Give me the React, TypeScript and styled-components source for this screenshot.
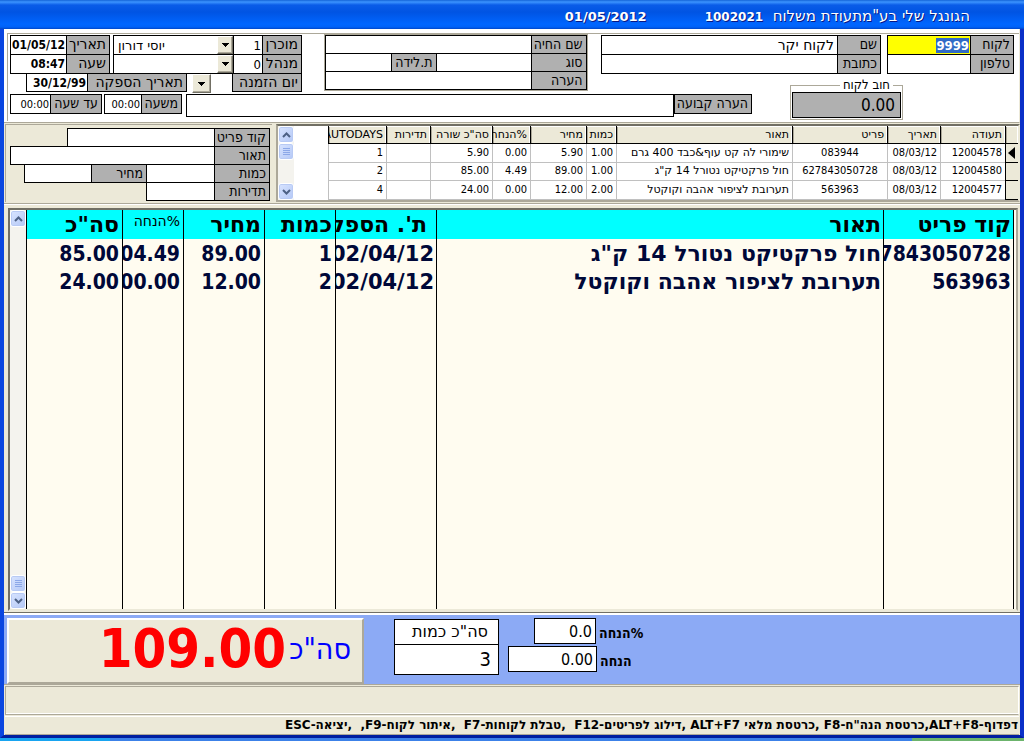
import React, { useEffect, useRef } from "react";
import styled, { createGlobalStyle } from "styled-components";

const face = "#ece9d8";
const shadow = "#aca899";
const dark = "#716f64";
const labelGray = "#b0b0b0";
const ui = '"DejaVu Sans Condensed", "DejaVu Sans", "Liberation Sans", sans-serif';
const wide = '"DejaVu Sans", "Liberation Sans", sans-serif';

const GlobalStyle = createGlobalStyle`
  *, *::before, *::after { box-sizing: border-box; }
  body { margin: 0; background: #0a3fd0; font: 12px/16px ${ui}; color: #000; }
  input, select, button, output { font: inherit; color: inherit; }
  input::selection { background: #316ac5; color: #fff; }
`;

const Desktop = styled.div`
  direction: rtl;
  min-height: 100vh;
  display: flex;
  flex-direction: column;
`;

const Window = styled.main`
  flex: 1;
  display: flex;
  flex-direction: column;
  border: solid;
  border-width: 0 4px 3px;
  border-color: #0a46e0 #0a30c8 #001ea0 #0a46e0;
  background: ${face};
`;

const TitleBar = styled.header`
  display: flex;
  align-items: center;
  gap: 58px;
  height: 29px;
  padding: 4px 54px 0 0;
  margin: 0 -4px;
  background: linear-gradient(#1464d8 0, #3c94ff 2px, #0a5ce8 5px, #0054e3 12px, #0066ff 24px, #0062f8 27px, #0046c8 29px);
  color: #fff;
  font-family: ${wide};
  text-shadow: 1px 1px 0 #0a1883;
`;

const TitleText = styled.h1`
  margin: 0;
  font-size: 15px;
  line-height: 16px;
  font-weight: 400;
  white-space: pre;
`;

const TitleNumber = styled.span`
  font-weight: 700;
  font-size: 12px;
`;

const TitleDate = styled.time`
  font-weight: 700;
  font-size: 13px;
`;

const HeaderPanel = styled.section`
  background: #fff;
  padding: 4px 0 1px 3px;
  border-bottom: 1px solid ${shadow};
  border-right: 1px solid ${face};
`;

const HeaderInner = styled.div`
  border-top: 1px solid ${shadow};
  border-left: 1px solid ${shadow};
  padding: 1px 5px 1px 2px;
`;

const TopRow = styled.div`
  display: flex;
  align-items: flex-start;
`;

const Group = styled.div<{ $w?: number; $grow?: number; $gap?: number; $etched?: boolean }>`
  flex: ${(p) => (p.$grow ? `${p.$grow} 1 0` : `0 0 ${p.$w}px`)};
  min-width: 0;
  margin-left: ${(p) => p.$gap ?? 0}px;
  ${(p) => p.$etched && `outline: 1px solid ${shadow};`}
`;

const FieldRow = styled.div<{ $w?: number; $h?: number }>`
  display: flex;
  gap: 1px;
  padding: 1px;
  width: ${(p) => (p.$w ? `${p.$w}px` : "auto")};
  height: ${(p) => p.$h ?? 20}px;
  background: #000;
  & + & { margin-top: -1px; }
`;

const Label = styled.label<{ $w: number; $wide?: boolean }>`
  flex: 0 0 ${(p) => p.$w}px;
  background: ${labelGray};
  padding: 0 3px;
  font-family: ${(p) => (p.$wide ? wide : ui)};
  font-size: 14px;
  line-height: 16px;
  white-space: nowrap;
  overflow: hidden;
`;

const Input = styled.input<{ $w?: number; $bold?: boolean; $yellow?: boolean; $size?: number }>`
  flex: ${(p) => (p.$w ? `0 0 ${p.$w}px` : "1 1 0")};
  min-width: 0;
  height: 100%;
  border: 0;
  border-radius: 0;
  outline: 0;
  padding: 0 1px;
  background: ${(p) => (p.$yellow ? "#ffff00" : "#fff")};
  font-weight: ${(p) => (p.$bold ? 700 : 400)};
  font-size: ${(p) => p.$size ?? 12}px;
  text-align: right;
`;

const NameInput = styled(Input)`
  font-family: ${wide};
  font-size: 14px;
  padding: 0 3px;
`;

const SelectWrap = styled.div`
  flex: 1 1 0;
  min-width: 0;
  display: flex;
  direction: ltr;
  background: #fff;
`;

const Select = styled.select`
  flex: 1;
  min-width: 0;
  appearance: none;
  border: 0;
  border-radius: 0;
  outline: 0;
  padding: 0 4px;
  background: #fff;
  font-family: ${wide};
  font-size: 13px;
  line-height: 17px;
`;

const DropButton = styled.button`
  flex: 0 0 16px;
  display: flex;
  align-items: center;
  justify-content: center;
  padding: 0;
  background: ${face};
  border: 1px solid;
  border-color: #fff ${dark} ${dark} #fff;
  box-shadow: inset -1px -1px 0 ${shadow};
`;

const OrderRow = styled.div`
  display: flex;
  margin-top: -1px;
`;

const DayButton = styled(DropButton)`
  flex-basis: 19px;
  height: 19px;
  margin: 1px 21px 0 5px;
`;

const BottomRow = styled.div`
  display: flex;
  align-items: flex-start;
  margin-top: 1px;
`;

const Debt = styled.fieldset`
  flex: 0 0 113px;
  min-width: 0;
  margin: -16px 111px 0 38px;
  padding: 0 1px 1px;
  border: 1px solid ${shadow};
`;

const DebtLegend = styled.legend`
  margin-right: 8px;
  padding: 0 3px;
  font-size: 13px;
  line-height: 14px;
`;

const DebtValue = styled.output`
  display: block;
  height: 26px;
  padding: 0 5px;
  border: 1px solid #000;
  background: ${labelGray};
  font-size: 17px;
  line-height: 25px;
`;

const Middle = styled.div`
  display: flex;
  flex-direction: row-reverse;
  gap: 4px;
  padding: 1px 0 1px 1px;
`;

const ItemForm = styled.form`
  flex: 0 0 267px;
  padding: 3px 2px 1px 4px;
  border-top: 1px solid ${shadow};
  border-left: 1px solid ${shadow};
`;

const HistoryPanel = styled.section`
  flex: 1;
  min-width: 0;
  display: flex;
  background: #fff;
  border: 2px solid;
  border-color: ${dark} ${face} ${shadow} ${shadow};
`;

const HistoryTable = styled.table`
  width: 100%;
  min-width: 0;
  margin-left: 34px;
  table-layout: fixed;
  border-collapse: separate;
  border-spacing: 0;
  font-size: 11px;
  line-height: 16px;
  th, td {
    height: 18px;
    padding: 0 3px;
    text-align: right;
    font-weight: 400;
    white-space: nowrap;
    overflow: hidden;
    border: solid #c0c0c0;
    border-width: 0 0 1px 1px;
  }
  th {
    background: ${face};
    border-color: #000;
    box-shadow: inset -1px 1px 0 #fff, inset 1px 0 0 ${shadow};
    font-family: ${wide};
  }
  td:nth-child(4) { text-align: center; }
  td:nth-child(5) { font-family: ${wide}; }
`;

const Marker = styled.td`
  && {
    padding: 0;
    background: ${face};
    border-color: #000;
  }
  svg { display: block; margin: 0 3px; }
`;

const ScrollTrack = styled.div`
  flex: 0 0 16px;
  display: flex;
  flex-direction: column;
  background: #f4f3ee;
`;

const ScrollButton = styled.button<{ $push?: boolean }>`
  height: 17px;
  flex: none;
  display: flex;
  align-items: center;
  justify-content: center;
  margin-top: ${(p) => (p.$push ? "auto" : "0")};
  padding: 0;
  border: 1px solid #fff;
  border-radius: 3px;
  background: linear-gradient(135deg, #d8e4ff, #b4c8f6);
  box-shadow: inset 0 0 0 1px #b8caf4;
`;

const MainPanel = styled.section`
  flex: 1;
  display: flex;
  padding: 4px 2px 2px 4px;
  border-top: 1px solid ${shadow};
  box-shadow: inset 0 1px 0 #fff;
`;

const MainFrame = styled.div`
  flex: 1;
  min-width: 0;
  display: flex;
  padding-right: 2px;
  background: #fffcf0;
  border: 2px solid;
  border-color: ${dark} ${shadow} ${face} ${dark};
`;

const MainTable = styled.table`
  width: 100%;
  min-width: 0;
  table-layout: fixed;
  border-collapse: separate;
  border-spacing: 0;
  border-right: 1px solid #000;
  font-size: 21px;
  line-height: 26px;
  font-weight: 700;
  color: #000838;
  th, td {
    height: 28px;
    padding: 2px 2px 0;
    text-align: right;
    vertical-align: top;
    white-space: nowrap;
    overflow: hidden;
    border-left: 1px solid #000;
  }
  th {
    height: 29px;
    padding-top: 1px;
    background: #00ffff;
    color: #000;
    font-family: ${wide};
    font-size: 22px;
    line-height: 28px;
  }
  th:nth-child(3) { padding-right: 9px; }
  td:nth-child(2) { font-family: ${wide}; font-size: 22px; }
  td:nth-child(3) { font-family: ${wide}; }
  td:nth-child(n+4), th:nth-child(n+4) { padding-right: 3px; }
  tr:last-child td { height: auto; }
`;

const SmallHead = styled.th`
  && {
    font-size: 14px;
    line-height: 20px;
    font-weight: 400;
  }
`;

const Totals = styled.section`
  display: flex;
  direction: ltr;
  align-items: flex-start;
  height: 72px;
  padding: 3px 0 0 3px;
  background: #8caaf5;
  border-top: 2px solid #fff;
  border-bottom: 1px solid ${shadow};
  box-shadow: 0 -1px 0 ${dark};
`;

const GrandTotal = styled.div`
  flex: 0 0 357px;
  display: flex;
  align-items: center;
  justify-content: flex-end;
  gap: 3px;
  height: 66px;
  padding: 0 11px 4px 0;
  background: ${face};
  border: 2px solid;
  border-color: #fff ${shadow} ${shadow} #fff;
`;

const Amount = styled.output`
  font-size: 54px;
  line-height: 58px;
  font-weight: 700;
  color: #f00;
`;

const AmountLabel = styled.span`
  font-size: 30px;
  line-height: 32px;
  color: #00f;
`;

const CountBox = styled.div`
  flex: 0 0 105px;
  margin: 1px 9px 0 30px;
  border: 1px solid #000;
  background: #fff;
  direction: rtl;
`;

const CountTitle = styled.div`
  height: 25px;
  padding: 0 10px;
  border-bottom: 1px solid #000;
  font-family: ${wide};
  font-size: 16px;
  line-height: 23px;
`;

const CountValue = styled.output`
  display: block;
  height: 29px;
  padding: 0 7px;
  font-size: 20px;
  line-height: 29px;
`;

const Discounts = styled.div`
  display: flex;
  flex-direction: column;
  gap: 2px;
`;

const DiscountRow = styled.div<{ $indent: number }>`
  display: flex;
  align-items: center;
  gap: 3px;
  padding-left: ${(p) => p.$indent}px;
`;

const DiscountInput = styled.input<{ $w: number }>`
  width: ${(p) => p.$w}px;
  height: 26px;
  padding: 0 3px;
  border: 1px solid #000;
  border-radius: 0;
  outline: 0;
  background: #fff;
  text-align: right;
  font-size: 16px;
`;

const DiscountLabel = styled.label`
  direction: rtl;
  padding-top: 4px;
  font-size: 14px;
  line-height: 18px;
  font-weight: 700;
`;

const MessageBar = styled.div`
  height: 29px;
  margin: 1px 1px 0;
  border: 1px solid ${shadow};
  border-right-color: #fff;
  box-shadow: inset 0 -1px 0 #fff;
`;

const HelpBar = styled.footer`
  height: 19px;
  margin: 1px 1px 0;
  padding-right: 1px;
  border-bottom: 1px solid ${shadow};
  border-top: 1px solid #fff;
  font-family: ${wide};
  font-size: 12px;
  line-height: 16px;
  font-weight: 700;
  white-space: pre;
  overflow: hidden;
`;

const Taskbar = styled.div`
  direction: ltr;
  display: flex;
  height: 3px;
  background: #3c81e8;
  &::before { content: ""; flex: 0 0 110px; background: #18a4f0; }
  &::after { content: ""; flex: 0 0 112px; margin-left: auto; background: #6cb46c; }
`;

const Triangle = () => (
  <svg width="7" height="4" viewBox="0 0 7 4" aria-hidden="true" shapeRendering="crispEdges">
    <path d="M0 0h7v1h-1v1h-1v1h-1v1h-1v-1h-1v-1h-1v-1h-1z" />
  </svg>
);

const Chevron = ({ down }: { down?: boolean }) => (
  <svg width="9" height="6" viewBox="0 0 9 6" aria-hidden="true">
    <path d={down ? "M1 1l3.500 3.500L8 1" : "M1 5l3.500-3.500L8 5"} fill="none" stroke="#4d6185" strokeWidth="2" />
  </svg>
);

const Grip = () => (
  <svg width="7" height="8" viewBox="0 0 7 8" aria-hidden="true" shapeRendering="crispEdges">
    <path d="M0 .5h7M0 2.500h7M0 4.500h7M0 6.500h7" stroke="#8ca8e8" />
  </svg>
);

const Scrollbar = ({ thumbLow }: { thumbLow?: boolean }) => (
  <ScrollTrack>
    <ScrollButton type="button" aria-label="גלילה למעלה"><Chevron /></ScrollButton>
    <ScrollButton type="button" $push={thumbLow} aria-label="מיקום"><Grip /></ScrollButton>
    <ScrollButton type="button" $push={!thumbLow} aria-label="גלילה למטה"><Chevron down /></ScrollButton>
  </ScrollTrack>
);

type FieldProps = {
  id: string;
  label: string;
  w: number;
  value?: string;
  inputW?: number;
  bold?: boolean;
  wideLabel?: boolean;
  size?: number;
};

const Field = ({ id, label, w, value = "", inputW, bold, wideLabel, size }: FieldProps) => (
  <>
    <Label $w={w} $wide={wideLabel} htmlFor={id}>{label}</Label>
    <Input id={id} $w={inputW} $bold={bold} $size={size} defaultValue={value} />
  </>
);

const history = [
  ["12004578", "08/03/12", "083944", "שימורי לה קט עוף&כבד 400 גרם", "1.00", "5.90", "0.00", "5.90", "", "1"],
  ["12004580", "08/03/12", "627843050728", 'חול פרקטיקט נטורל 14 ק"ג', "1.00", "89.00", "4.49", "85.00", "", "2"],
  ["12004577", "08/03/12", "563963", "תערובת לציפור אהבה וקוקטל", "2.00", "12.00", "0.00", "24.00", "", "4"],
];
const historyHeads = ["תעודה", "תאריך", "פריט", "תאור", "כמות", "מחיר", "%הנחה", 'סה"כ שורה', "תדירות", "AUTODAYS"];
const historyWidths = [13, 65, 53, 95, 0, 30, 56, 38, 62, 44, 58];

const items = [
  ["627843050728", 'חול פרקטיקט נטורל 14 ק"ג', "02/04/12", "1", "89.00", "04.49", "85.00"],
  ["563963", "תערובת לציפור אהבה וקוקטל", "02/04/12", "2", "12.00", "00.00", "24.00"],
];
const itemWidths = [130, 0, 101, 71, 81, 61, 96];

const Cols = ({ widths }: { widths: number[] }) => (
  <colgroup>
    {widths.map((w, i) => <col key={i} width={w || undefined} />)}
  </colgroup>
);

export default function App() {
  const customer = useRef<HTMLInputElement>(null);
  useEffect(() => {
    customer.current?.focus();
    customer.current?.select();
  }, []);

  return (
    <Desktop lang="he">
      <GlobalStyle />
      <Window>
        <TitleBar>
          <TitleText>
            {'הגונגל שלי בע"מתעודת משלוח  '}
            <TitleNumber>1002021</TitleNumber>
          </TitleText>
          <TitleDate>01/05/2012</TitleDate>
        </TitleBar>

        <HeaderPanel>
          <HeaderInner>
            <TopRow>
              <Group $w={127} $gap={6}>
                <FieldRow>
                  <Label $w={42} htmlFor="customer">לקוח</Label>
                  <Input id="customer" ref={customer} $yellow $bold $size={13} defaultValue="9999" />
                </FieldRow>
                <FieldRow><Field id="phone" label="טלפון" w={42} /></FieldRow>
              </Group>
              <Group $grow={281} $gap={14}>
                <FieldRow>
                  <Label $w={42} htmlFor="name">שם</Label>
                  <NameInput id="name" defaultValue="לקוח יקר" />
                </FieldRow>
                <FieldRow><Field id="address" label="כתובת" w={42} /></FieldRow>
              </Group>
              <Group $grow={262} $gap={23} $etched>
                <FieldRow $h={19}><Field id="pet" label="שם החיה" w={54} /></FieldRow>
                <FieldRow $h={19}>
                  <Field id="kind" label="סוג" w={54} inputW={94} />
                  <Field id="birth" label="ת.לידה" w={44} />
                </FieldRow>
                <FieldRow $h={19}><Field id="remark" label="הערה" w={54} /></FieldRow>
              </Group>
              <Group $w={292}>
                <TopRow>
                  <Group $w={189} $gap={3}>
                    <FieldRow>
                      <Field id="seller" label="מוכרן" w={38} value="1" inputW={28} wideLabel size={13} />
                      <SelectWrap>
                        <Select aria-label="שם מוכרן"><option>יוסי דורון</option></Select>
                        <DropButton as="span" aria-hidden="true"><Triangle /></DropButton>
                      </SelectWrap>
                    </FieldRow>
                    <FieldRow>
                      <Field id="manager" label="מנהל" w={38} value="0" inputW={28} wideLabel size={13} />
                      <SelectWrap>
                        <Select aria-label="שם מנהל"><option></option></Select>
                        <DropButton as="span" aria-hidden="true"><Triangle /></DropButton>
                      </SelectWrap>
                    </FieldRow>
                  </Group>
                  <Group $w={100}>
                    <FieldRow><Field id="date" label="תאריך" w={42} value="01/05/12" bold wideLabel /></FieldRow>
                    <FieldRow><Field id="time" label="שעה" w={42} value="08:47" bold wideLabel /></FieldRow>
                  </Group>
                </TopRow>
                <OrderRow>
                  <FieldRow $w={70} $h={19}><Label as="span" $w={68} $wide>יום הזמנה</Label></FieldRow>
                  <DayButton type="button" aria-label="יום הזמנה"><Triangle /></DayButton>
                  <Group $w={161}>
                    <FieldRow $h={19}><Field id="delivery" label="תאריך הספקה" w={98} value="30/12/99" bold wideLabel /></FieldRow>
                  </Group>
                </OrderRow>
              </Group>
            </TopRow>
            <BottomRow>
              <Debt>
                <DebtLegend>חוב לקוח</DebtLegend>
                <DebtValue>0.00</DebtValue>
              </Debt>
              <FieldRow $w={78}><Label $w={76} htmlFor="fixed">הערה קבועה</Label></FieldRow>
              <Group $grow={1} $gap={4}>
                <FieldRow $h={23}><Input id="fixed" /></FieldRow>
              </Group>
              <Group $w={78} $gap={2}>
                <FieldRow><Field id="from" label="משעה" w={39} value="00:00" size={11} /></FieldRow>
              </Group>
              <Group $w={92}>
                <FieldRow><Field id="until" label="עד שעה" w={50} value="00:00" size={11} /></FieldRow>
              </Group>
            </BottomRow>
          </HeaderInner>
        </HeaderPanel>

        <Middle>
          <ItemForm>
            <FieldRow $h={19} $w={203}><Field id="code" label="קוד פריט" w={54} /></FieldRow>
            <FieldRow $h={19} $w={260}><Field id="desc" label="תאור" w={54} /></FieldRow>
            <FieldRow $h={19} $w={246}>
              <Field id="qty" label="כמות" w={54} inputW={67} />
              <Field id="price" label="מחיר" w={54} />
            </FieldRow>
            <FieldRow $h={19} $w={124}><Field id="freq" label="תדירות" w={54} /></FieldRow>
          </ItemForm>
          <HistoryPanel>
            <HistoryTable>
              <Cols widths={historyWidths} />
              <thead>
                <tr>
                  <th />
                  {historyHeads.map((h) => <th key={h}>{h}</th>)}
                </tr>
              </thead>
              <tbody>
                {history.map((row, r) => (
                  <tr key={row[0]}>
                    <Marker>
                      {r === 0 && (
                        <svg width="7" height="12" viewBox="0 0 7 12" aria-hidden="true"><path d="M7 0v12L0 6z" /></svg>
                      )}
                    </Marker>
                    {row.map((c, i) => <td key={i}>{c}</td>)}
                  </tr>
                ))}
              </tbody>
            </HistoryTable>
            <Scrollbar />
          </HistoryPanel>
        </Middle>

        <MainPanel>
          <MainFrame>
            <MainTable>
              <Cols widths={itemWidths} />
              <thead>
                <tr>
                  <th>קוד פריט</th>
                  <th>תאור</th>
                  <th>ת'. הספקה</th>
                  <th>כמות</th>
                  <th>מחיר</th>
                  <SmallHead>%הנחה</SmallHead>
                  <th>סה"כ</th>
                </tr>
              </thead>
              <tbody>
                {items.map((row) => (
                  <tr key={row[0]}>{row.map((c, i) => <td key={i}>{c}</td>)}</tr>
                ))}
                <tr>{itemWidths.map((_, i) => <td key={i} />)}</tr>
              </tbody>
            </MainTable>
            <Scrollbar thumbLow />
          </MainFrame>
        </MainPanel>

        <Totals>
          <GrandTotal>
            <Amount>109.00</Amount>
            <AmountLabel dir="rtl">סה"כ</AmountLabel>
          </GrandTotal>
          <CountBox>
            <CountTitle>סה"כ כמות</CountTitle>
            <CountValue>3</CountValue>
          </CountBox>
          <Discounts>
            <DiscountRow $indent={26}>
              <DiscountInput id="discount-rate" $w={62} defaultValue="0.0" />
              <DiscountLabel htmlFor="discount-rate">%הנחה</DiscountLabel>
            </DiscountRow>
            <DiscountRow $indent={0}>
              <DiscountInput id="discount" $w={89} defaultValue="0.00" />
              <DiscountLabel htmlFor="discount">הנחה</DiscountLabel>
            </DiscountRow>
          </Discounts>
        </Totals>

        <MessageBar />
        <HelpBar>{'דפדוף-ALT+F8,כרטסת הנה"ח-F8 ,כרטסת מלאי ALT+F7 ,דילוג לפריטים-F12  ,טבלת לקוחות-F7  ,איתור לקוח-F9,  ,יציאה-ESC'}</HelpBar>
      </Window>
      <Taskbar />
    </Desktop>
  );
}
